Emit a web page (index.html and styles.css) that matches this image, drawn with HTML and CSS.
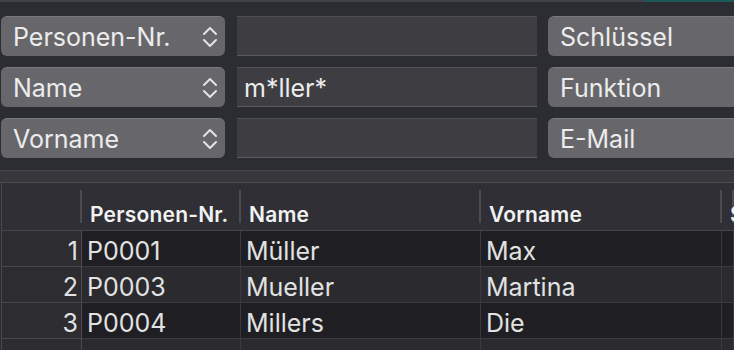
FILE: index.html
```html
<!DOCTYPE html>
<html lang="de">
<head>
  <meta charset="UTF-8" />
  <title>Personensuche</title>
  <link rel="stylesheet" href="styles.css">
</head>
<body>
  <div class="topbar">
    <div class="topbar-grey"></div>
    <div class="topbar-teal"></div>
  </div>

  <div class="filters">
    <div class="popup">
      <span>Personen-Nr.</span>
      <svg class="chevrons" width="16" height="22" viewBox="0 0 16 22"><path d="M2 8 L8 2 L14 8 M2 14 L8 20 L14 14" /></svg>
    </div>
    <div class="field"></div>
    <div class="popup popup-wide"><span>Schlüssel</span></div>

    <div class="popup">
      <span>Name</span>
      <svg class="chevrons" width="16" height="22" viewBox="0 0 16 22"><path d="M2 8 L8 2 L14 8 M2 14 L8 20 L14 14" /></svg>
    </div>
    <div class="field">m*ller*</div>
    <div class="popup popup-wide"><span>Funktion</span></div>

    <div class="popup">
      <span>Vorname</span>
      <svg class="chevrons" width="16" height="22" viewBox="0 0 16 22"><path d="M2 8 L8 2 L14 8 M2 14 L8 20 L14 14" /></svg>
    </div>
    <div class="field"></div>
    <div class="popup popup-wide"><span>E-Mail</span></div>
  </div>

  <div class="splitter"></div>

  <div class="grid">
    <div class="row head">
      <div class="cell num"></div>
      <div class="cell">Personen-Nr.</div>
      <div class="cell">Name</div>
      <div class="cell">Vorname</div>
      <div class="cell">S</div>
    </div>
    <div class="row dark">
      <div class="cell num">1</div>
      <div class="cell">P0001</div>
      <div class="cell">Müller</div>
      <div class="cell">Max</div>
      <div class="cell"></div>
    </div>
    <div class="row">
      <div class="cell num">2</div>
      <div class="cell">P0003</div>
      <div class="cell">Mueller</div>
      <div class="cell">Martina</div>
      <div class="cell"></div>
    </div>
    <div class="row dark">
      <div class="cell num">3</div>
      <div class="cell">P0004</div>
      <div class="cell">Millers</div>
      <div class="cell">Die</div>
      <div class="cell"></div>
    </div>
    <div class="row">
      <div class="cell num"></div>
      <div class="cell"></div>
      <div class="cell"></div>
      <div class="cell"></div>
      <div class="cell"></div>
    </div>
  </div>
</body>
</html>
```

FILE: styles.css
```css
body {
  margin: 0;
  padding: 0;
  width: 734px;
  height: 350px;
  overflow: hidden;
  background-color: #2c2c33;
  font-family: Inter, "Noto Sans", sans-serif;
  color: #e6e6e6;
}
.topbar {
  display: flex;
  height: 2px;
}
.topbar-grey {
  flex: 1;
  background-color: #414146;
}
.topbar-teal {
  width: 90px;
  background-color: #1d5757;
}
.filters {
  display: grid;
  grid-template-columns: 224px 300px 1fr;
  grid-auto-rows: 40px;
  column-gap: 12px;
  row-gap: 11px;
  padding: 14px 0 0 1px;
  margin-right: -20px;
}
.popup {
  display: flex;
  align-items: center;
  justify-content: space-between;
  background-color: #67676b;
  border-top: 1px solid #7a7a7e;
  border-radius: 6px;
  padding: 1px 7px 0 12px;
  font-size: 25px;
  color: #ececec;
  box-sizing: border-box;
}
.popup-wide {
  margin-left: -1px;
}
.chevrons {
  fill: none;
  stroke: #e4e4e4;
  stroke-width: 2;
  stroke-linecap: round;
  stroke-linejoin: round;
}
.field {
  display: flex;
  align-items: center;
  background-color: #3d3d42;
  border-top: 1px solid #505055;
  border-bottom: 1px solid #5a5a5f;
  padding: 1px 7px 0;
  font-size: 25px;
  color: #ececec;
  box-sizing: border-box;
}
.splitter {
  margin-top: 12px;
  height: 11px;
  background-color: #37373c;
  border-top: 1px solid #48484c;
  border-bottom: 1px solid #4b4b50;
}
.grid {
  margin-left: 1px;
  border-left: 1px solid #4a4a4f;
}
.row {
  display: grid;
  grid-template-columns: 80px 159px 240px 241px 1fr;
  height: 36px;
  background-color: #2a2a2f;
  border-bottom: 1px solid #3b3b40;
  box-sizing: border-box;
}
.row.dark {
  background-color: #1f1f23;
}
.cell {
  display: flex;
  align-items: center;
  padding: 4px 0 0 5px;
  font-size: 25px;
  color: #e2e2e2;
  border-right: 1px solid #38383d;
  white-space: nowrap;
  overflow: hidden;
}
.cell.num {
  justify-content: flex-end;
  padding: 4px 3px 0 0;
  background-color: #2c2c31;
  border-right-color: #4a4a4f;
  border-bottom: 1px solid #46464b;
  margin-bottom: -1px;
}
.row.head {
  height: 48px;
  background-color: #2f2f35;
  border-bottom: 1px solid #45454a;
}
.head .cell {
  align-items: flex-end;
  padding: 0 0 3px 8px;
  font-size: 21px;
  font-weight: 600;
  letter-spacing: 0.2px;
  color: #f2f2f2;
  border-right: none;
  background: linear-gradient(#4b4b50, #4b4b50) no-repeat right 7px / 2px 33px;
}
.head .cell.num {
  background-color: #2f2f35;
  border-bottom: none;
  margin-bottom: 0;
}
```
